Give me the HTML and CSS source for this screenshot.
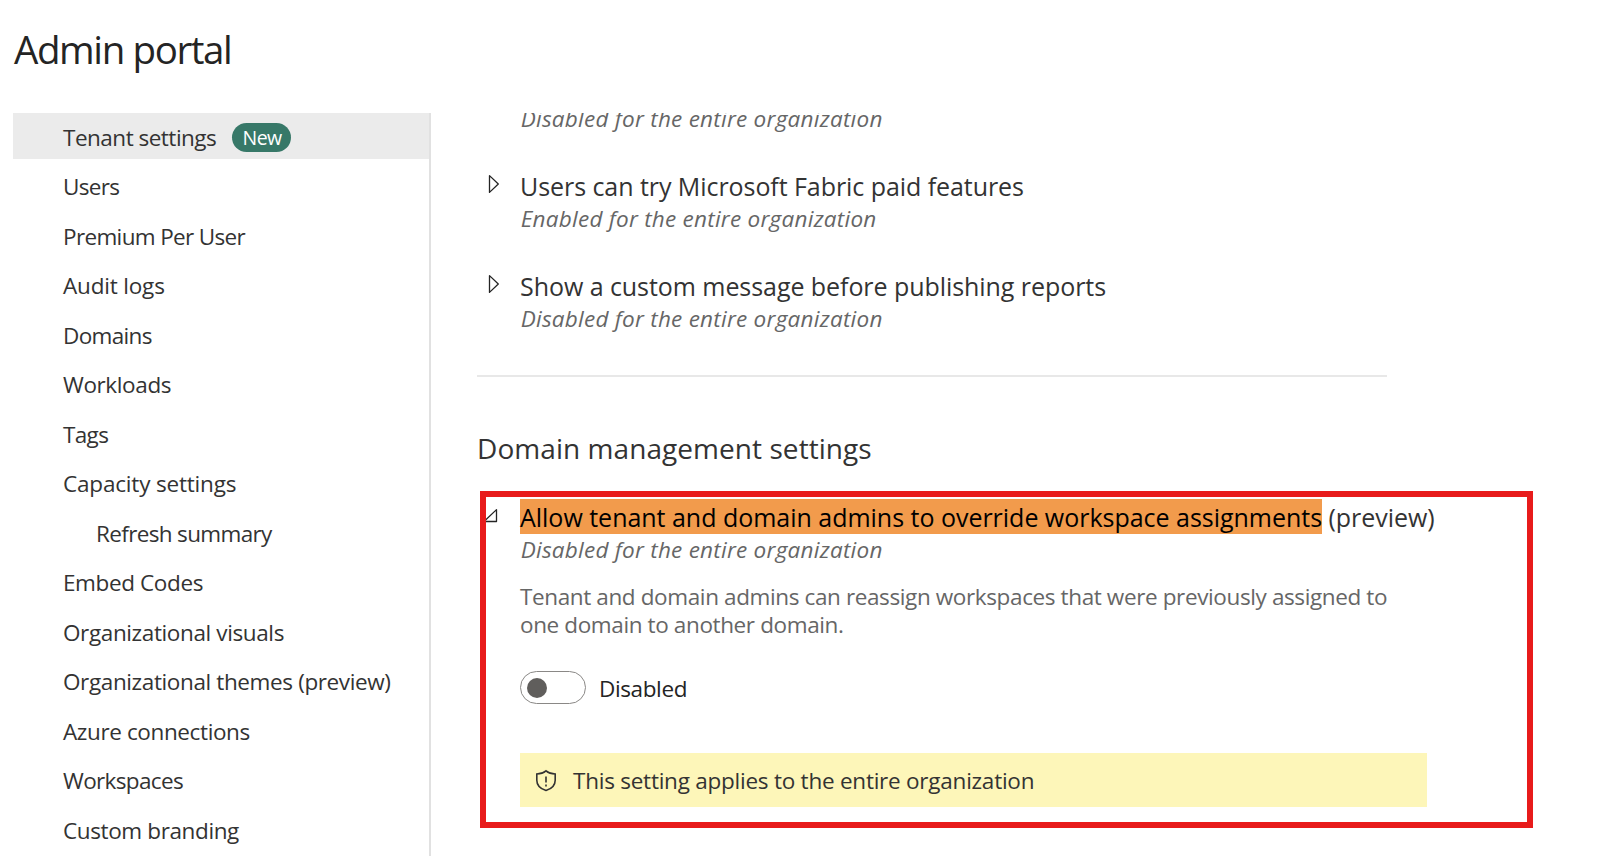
FILE: index.html
```html
<!DOCTYPE html>
<html lang="en">
<head>
  <meta charset="UTF-8" />
  <meta name="viewport" content="width=device-width, initial-scale=1.0"/>
  <title>Admin portal</title>
  <link rel="stylesheet" href="styles.css">
</head>
<body>
  <header class="header">
    <h1>Admin portal</h1>
  </header>

  <div class="layout">
    <nav class="sidebar">
      <a class="nav-item active">Tenant settings <span class="badge">New</span></a>
      <a class="nav-item tight">Users</a>
      <a class="nav-item tight">Premium Per User</a>
      <a class="nav-item loose">Audit logs</a>
      <a class="nav-item tight">Domains</a>
      <a class="nav-item">Workloads</a>
      <a class="nav-item tight">Tags</a>
      <a class="nav-item loose">Capacity settings</a>
      <a class="nav-item nested tight">Refresh summary</a>
      <a class="nav-item">Embed Codes</a>
      <a class="nav-item">Organizational visuals</a>
      <a class="nav-item">Organizational themes (preview)</a>
      <a class="nav-item">Azure connections</a>
      <a class="nav-item tight">Workspaces</a>
      <a class="nav-item">Custom branding</a>
    </nav>

    <main class="content">
      <section class="setting scrolled">
        <p class="status">Disabled for the entire organization</p>
      </section>

      <section class="setting">
        <svg class="arrow" width="12" height="20" viewBox="0 0 12 20"><path d="M1.5 1.6V18.4L10.3 10Z"/></svg>
        <h3>Users can try Microsoft Fabric paid features</h3>
        <p class="status">Enabled for the entire organization</p>
      </section>

      <section class="setting">
        <svg class="arrow" width="12" height="20" viewBox="0 0 12 20"><path d="M1.5 1.6V18.4L10.3 10Z"/></svg>
        <h3>Show a custom message before publishing reports</h3>
        <p class="status">Disabled for the entire organization</p>
      </section>

      <hr>

      <h2>Domain management settings</h2>

      <section class="setting expanded">
        <svg class="arrow" width="16" height="16" viewBox="0 0 16 16"><path d="M14.5 1.6V13.5H2Z"/></svg>
        <h3><mark>Allow tenant and domain admins to override workspace assignments</mark> (preview)</h3>
        <p class="status">Disabled for the entire organization</p>
        <p class="description">Tenant and domain admins can reassign workspaces that were previously assigned to<br>one domain to another domain.</p>
        <div class="toggle-row">
          <span class="toggle"></span>
          <span class="toggle-label">Disabled</span>
        </div>
        <div class="notice">
          <svg width="22" height="24" viewBox="0 0 22 24">
            <path d="M11 2.8C8.5 4.9 5.2 5.9 1.8 6V12.2C1.8 17.3 5.5 20.8 11 22.5C16.5 20.8 20.2 17.3 20.2 12.2V6C16.8 5.9 13.5 4.9 11 2.8Z"/>
            <path d="M11 8.5V14.5M11 16.6V18.4"/>
          </svg>
          <span>This setting applies to the entire organization</span>
        </div>
        <div class="outline"></div>
      </section>
    </main>
  </div>
</body>
</html>
```
FILE: styles.css
```css
:root {
  --text: #333333;
  --muted: #666666;
  --border: #e1e1e1;
  --highlight: #f29b4c;
  --outline: #e81b1b;
}

* {
  box-sizing: border-box;
}

body {
  font-family: "Open Sans", "Noto Sans", sans-serif;
  font-size: 22.5px;
  color: var(--text);
  background-color: #ffffff;
  margin: 0;
  height: 856px;
  overflow: hidden;
}

h1, h2, h3, p {
  margin: 0;
  font-weight: 400;
}

.header {
  height: 113px;
  padding: 24px 0 0 14px;
}

h1 {
  font-size: 38.5px;
  line-height: 50px;
  letter-spacing: -1.4px;
  color: #242424;
}

.layout {
  display: flex;
  height: 743px;
  padding-left: 13px;
}

.sidebar {
  display: flex;
  flex-direction: column;
  flex: none;
  gap: 3.5px;
  width: 418px;
  border-right: 2px solid var(--border);
  overflow: hidden;
}

.nav-item {
  display: flex;
  align-items: center;
  flex: none;
  height: 46px;
  padding: 2px 0 0 50px;
  letter-spacing: -0.38px;
}

.nav-item.active {
  background-color: #ebebeb;
  letter-spacing: -0.5px;
}

.nav-item.tight {
  letter-spacing: -0.65px;
}

.nav-item.loose {
  letter-spacing: -0.18px;
}

.nav-item.nested {
  padding-left: 83px;
}

.badge {
  margin-left: 16px;
  padding: 1px 0 0 0.5px;
  width: 59px;
  height: 29px;
  border-radius: 15px;
  background-color: #377868;
  color: #ffffff;
  font-size: 19.5px;
  line-height: 28px;
  letter-spacing: -0.6px;
  text-align: center;
}

.content {
  flex: 1;
  padding-left: 46px;
  overflow: hidden;
}

.setting {
  position: relative;
  margin-bottom: 34px;
  padding-left: 43px;
}

.setting.scrolled {
  margin-top: -9px;
}

.arrow {
  position: absolute;
  left: 11px;
  top: 6px;
  fill: none;
  stroke: #242424;
  stroke-width: 1.3;
  stroke-linejoin: round;
}

h3 {
  padding-top: 1px;
  font-size: 25px;
  line-height: 35px;
  letter-spacing: -0.06px;
  white-space: nowrap;
}

mark {
  display: inline-block;
  padding-top: 2px;
  background-color: var(--highlight);
  color: #000000;
  line-height: 33px;
  letter-spacing: -0.02px;
}

.status {
  padding-left: 0.7px;
  line-height: 30px;
  font-style: italic;
  letter-spacing: 0.25px;
  color: var(--muted);
}

hr {
  width: 910px;
  height: 2px;
  margin: 41px 0 52px;
  border: none;
  background-color: #e8e8e8;
}

h2 {
  margin-bottom: 32px;
  font-size: 28px;
  line-height: 38px;
  letter-spacing: 0.06px;
}

.expanded h3 {
  height: 36px;
  padding-top: 0;
}

.expanded .arrow {
  left: 5px;
  top: 9px;
}

.description {
  margin-top: 18px;
  line-height: 28px;
  letter-spacing: -0.38px;
  color: var(--muted);
  white-space: nowrap;
}

.toggle-row {
  display: flex;
  align-items: center;
  gap: 13px;
  margin-top: 32px;
  height: 33px;
  color: #242424;
}

.toggle {
  display: flex;
  align-items: center;
  width: 66px;
  height: 33px;
  padding-left: 6px;
  border: 1px solid #8a8886;
  border-radius: 17px;
}

.toggle::before {
  content: "";
  width: 20px;
  height: 20px;
  border-radius: 50%;
  background-color: #605e5c;
}

.toggle-label {
  padding-top: 2px;
  letter-spacing: -0.38px;
}

.notice {
  display: flex;
  align-items: center;
  gap: 16px;
  width: 907px;
  height: 54px;
  margin-top: 49px;
  padding-left: 15px;
  background-color: #fdf6b9;
  letter-spacing: -0.24px;
}

.notice svg {
  fill: none;
  stroke: #333333;
  stroke-width: 1.6;
}

/* red frame drawn over the expanded setting */
.outline {
  position: absolute;
  left: 2.5px;
  top: -8px;
  width: 1053.5px;
  height: 337px;
  border: 6px solid var(--outline);
}
```
